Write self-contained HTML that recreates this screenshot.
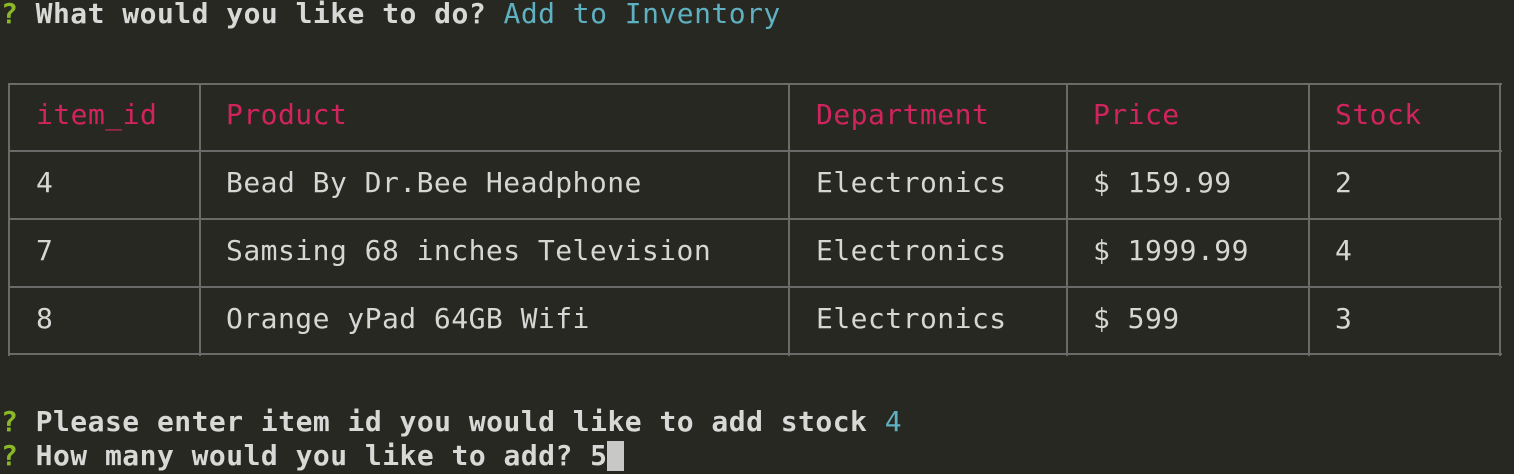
<!DOCTYPE html>
<html><head><meta charset="utf-8"><style>
html,body{margin:0;padding:0;width:1514px;height:474px;overflow:hidden;background:#272822;}
body{position:relative;font-family:"DejaVu Sans Mono","Liberation Mono",monospace;font-size:28px;color:#d6d6d4;}
.t{position:absolute;white-space:pre;line-height:34px;letter-spacing:0.47px;}
.b{font-weight:bold;color:#d8d8d6;}
.g{color:#8ab828;}
.c{color:#5fb0c0;font-weight:normal;}
.p{color:#d1245f;}
.h{position:absolute;background:#6a6a68;height:2px;left:8px;width:1494px;}
.v{position:absolute;background:#6a6a68;width:2px;top:83px;height:273px;}
.cur{display:inline-block;width:17px;height:30px;background:#c8c8c6;vertical-align:-6px;}
</style></head><body>
<div class="t b" style="left:1px;top:-3px"><span class="g">?</span> What would you like to do? <span class="c">Add to Inventory</span></div>

<div class="h" style="top:83px"></div>
<div class="h" style="top:150px"></div>
<div class="h" style="top:218px"></div>
<div class="h" style="top:286px"></div>
<div class="h" style="top:353px"></div>
<div class="v" style="left:8px"></div>
<div class="v" style="left:199px"></div>
<div class="v" style="left:788px"></div>
<div class="v" style="left:1066px"></div>
<div class="v" style="left:1308px"></div>
<div class="v" style="left:1499px"></div>

<div class="t p" style="left:36px;top:98px">item_id</div>
<div class="t p" style="left:226px;top:98px">Product</div>
<div class="t p" style="left:816px;top:98px">Department</div>
<div class="t p" style="left:1093px;top:98px">Price</div>
<div class="t p" style="left:1335px;top:98px">Stock</div>

<div class="t" style="left:36px;top:166px">4</div>
<div class="t" style="left:226px;top:166px">Bead By Dr.Bee Headphone</div>
<div class="t" style="left:816px;top:166px">Electronics</div>
<div class="t" style="left:1093px;top:166px">$ 159.99</div>
<div class="t" style="left:1335px;top:166px">2</div>

<div class="t" style="left:36px;top:234px">7</div>
<div class="t" style="left:226px;top:234px">Samsing 68 inches Television</div>
<div class="t" style="left:816px;top:234px">Electronics</div>
<div class="t" style="left:1093px;top:234px">$ 1999.99</div>
<div class="t" style="left:1335px;top:234px">4</div>

<div class="t" style="left:36px;top:302px">8</div>
<div class="t" style="left:226px;top:302px">Orange yPad 64GB Wifi</div>
<div class="t" style="left:816px;top:302px">Electronics</div>
<div class="t" style="left:1093px;top:302px">$ 599</div>
<div class="t" style="left:1335px;top:302px">3</div>

<div class="t b" style="left:1px;top:405px"><span class="g">?</span> Please enter item id you would like to add stock <span class="c">4</span></div>
<div class="t b" style="left:1px;top:439px"><span class="g">?</span> How many would you like to add? 5<span class="cur"></span></div>
</body></html>
